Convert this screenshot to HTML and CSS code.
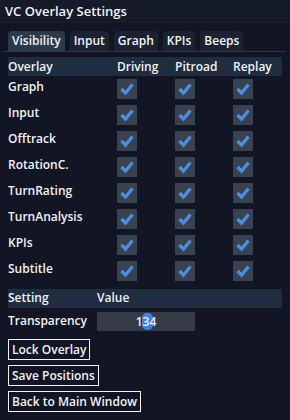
FILE: index.html
```html
<!DOCTYPE html>
<html lang="en">
<head>
    <meta charset="UTF-8">
    <title>VC Overlay Settings</title>
    <link rel="stylesheet" href="styles.css">
</head>
<body>
    <div class="window">
        <div class="title-bar">VC Overlay Settings</div>
        <div class="content">
            <div class="tabs">
                <div class="tab active">Visibility</div>
                <div class="tab">Input</div>
                <div class="tab">Graph</div>
                <div class="tab">KPIs</div>
                <div class="tab">Beeps</div>
            </div>

            <div class="table" id="overlayTable">
                <div class="row header">
                    <span>Overlay</span><span>Driving</span><span>Pitroad</span><span>Replay</span>
                </div>
            </div>

            <div class="settings">
                <div class="srow header"><span>Setting</span><span>Value</span></div>
                <div class="srow">
                    <span>Transparency</span>
                    <div class="slider"><i class="grab"></i><b class="val">134</b></div>
                </div>
            </div>

            <div class="buttons">
                <button class="btn">Lock Overlay</button>
                <button class="btn">Save Positions</button>
                <button class="btn">Back to Main Window</button>
            </div>
        </div>
    </div>

    <script>
        const overlays = ['Graph', 'Input', 'Offtrack', 'RotationC.', 'TurnRating', 'TurnAnalysis', 'KPIs', 'Subtitle'];
        const checkSvg = '<i class="check"><svg viewBox="0 0 20 20" width="20" height="20"><polyline points="4.5,10 8.5,14 15.5,5.5" fill="none" stroke="#4a8fe6" stroke-width="3.2"/></svg></i>';
        const table = document.getElementById('overlayTable');
        overlays.forEach(name => {
            const row = document.createElement('div');
            row.className = 'row';
            row.innerHTML = `<span>${name}</span>` + checkSvg + checkSvg + checkSvg;
            table.appendChild(row);
        });
    </script>
</body>
</html>
```

FILE: styles.css
```css
body {
    margin: 0;
    background-color: #111524;
    font-family: 'Open Sans', sans-serif;
    font-weight: 600;
    font-size: 12px;
    color: #f2f2f2;
}

.window {
    width: 290px;
    height: 420px;
}

.title-bar {
    height: 23px;
    line-height: 23px;
    padding-left: 5px;
    font-size: 13px;
    background-color: #151a28;
}

.content {
    padding: 8px 8px 0 8px;
}

.tabs {
    display: flex;
    gap: 5px;
    margin: 0 -4px 0 -4px;
    padding-left: 4px;
    border-bottom: 1px solid #2a3a4e;
    height: 20px;
}

.tab {
    padding: 0 4px;
    line-height: 20px;
    background-color: #1b2231;
    border-radius: 4px 4px 0 0;
}

.tab.active {
    background-color: #2c3a4b;
}

.table {
    margin-top: 5px;
    width: 274px;
}

.row {
    display: grid;
    grid-template-columns: 109px 58px 58px 49px;
    align-items: center;
    height: 26px;
}

.row span {
    position: relative;
    top: -3px;
}

.row.header {
    height: 19px;
    background-color: #1e2d40;
}

.row.header span {
    top: 0;
}

.check {
    display: block;
    width: 20px;
    height: 20px;
    background-color: #3a424f;
}

.check svg {
    display: block;
}

.settings {
    margin-top: 5px;
    width: 274px;
}

.srow {
    display: grid;
    grid-template-columns: 89px 98px;
    align-items: center;
    height: 19px;
}

.srow.header {
    background-color: #1e2d40;
    margin-bottom: 4px;
}

.srow > span {
    position: relative;
    top: -1px;
}

.slider {
    height: 19px;
    background-color: #353c48;
    position: relative;
    text-align: center;
    line-height: 19px;
}

.grab {
    position: absolute;
    left: 45px;
    top: 1px;
    width: 11px;
    height: 17px;
    border-radius: 5px;
    background-color: #3d82e8;
}

.val {
    position: relative;
    font-weight: 600;
}

.buttons {
    display: flex;
    flex-direction: column;
    align-items: flex-start;
    gap: 5px;
    margin-top: 8px;
}

.btn {
    font-family: inherit;
    font-weight: 600;
    font-size: 12px;
    color: #f2f2f2;
    background: transparent;
    border: 1px solid #f2f2f2;
    padding: 0 3px;
    height: 21px;
    line-height: 19px;
}
```
